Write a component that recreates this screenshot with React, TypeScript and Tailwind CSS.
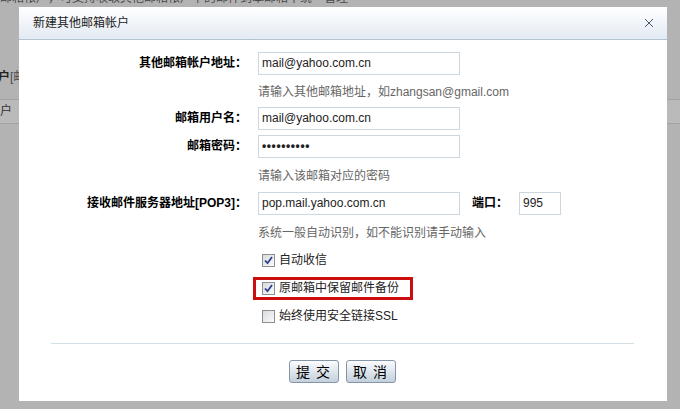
import React from "react";

function Check({ checked }: { checked: boolean }) {
  return (
    <span className="relative flex h-[13px] w-[13px] shrink-0 items-center justify-center border border-[#8c8f93] bg-gradient-to-br from-[#d9dbdd] to-[#f9fafa]">
      {checked && (
        <svg width="9" height="9" viewBox="0 0 9 9" className="block">
          <path d="M1 4.5 L3.5 7.2 L8 1" fill="none" stroke="#2a3f8f" strokeWidth="1.8" />
        </svg>
      )}
    </span>
  );
}

function Field({ value, w = "w-[202px]" }: { value: React.ReactNode; w?: string }) {
  return (
    <div className={`flex h-[23px] ${w} items-center border border-[#cdd7df] bg-white px-[3px] text-[12px] leading-[15px] text-[#222]`}>
      {value}
    </div>
  );
}

function Label({ children }: { children: React.ReactNode }) {
  return (
    <div className="flex h-[23px] w-[228px] shrink-0 items-center justify-end whitespace-nowrap text-[12px] font-bold leading-[15px] text-black">
      {children}
    </div>
  );
}

function Hint({ children, cls }: { children: React.ReactNode; cls: string }) {
  return (
    <div className={`${cls} ml-[239px] flex h-[18px] items-center whitespace-nowrap text-[12px] leading-[15px] text-[#666]`}>
      {children}
    </div>
  );
}

function CbRow({ label, checked, red, cls }: { label: string; checked: boolean; red?: boolean; cls: string }) {
  return (
    <div
      className={`${cls} ml-[234px] flex h-[23px] w-[160px] items-center gap-[4px] whitespace-nowrap border-[3px] pl-[6px] text-[12px] text-[#222] ${
        red ? "border-[#cc0d0d]" : "border-transparent"
      }`}
    >
      <Check checked={checked} />
      <span className="leading-[15px]">{label}</span>
    </div>
  );
}

export default function App() {
  return (
    <div className="relative h-[409px] w-[680px] overflow-hidden bg-[#b3b3b3] font-['Liberation_Sans','Noto_Sans_CJK_SC',sans-serif]">
      {/* page underneath */}
      <div className="-mt-[10px] flex h-[16px] items-center whitespace-nowrap text-[12px] leading-[15px] text-[#4a4a4a]">
        邮箱帐户，可支持收取其他邮箱帐户下的邮件到本邮箱中统一管理
      </div>
      <div className="mt-[63px] flex h-[16px] items-center whitespace-nowrap text-[12px] leading-[15px] text-[#4a4a4a]">
        <span className="-ml-[2px] font-bold text-[#222]">户</span>[邮箱设置]
      </div>
      <div className="mt-[14px] flex h-[25px] items-center border-y border-[#a2a2a2] bg-[#bababa] text-[12px] leading-[15px] text-[#333]">
        户
      </div>

      {/* dialog */}
      <div className="absolute left-[19px] top-[7px] w-[648px] bg-white">
        <div className="flex h-[33px] items-center justify-between border-b border-[#b3c3d0] bg-gradient-to-b from-white to-[#e3eaf3] pl-[14px] pr-[13px]">
          <span className="text-[12px] leading-[15px] text-[#222]">新建其他邮箱帐户</span>
          <svg width="10" height="10" viewBox="0 0 10 10">
            <path d="M1 1 L9 9 M9 1 L1 9" stroke="#4b5866" strokeWidth="1" />
          </svg>
        </div>
        <div className="pb-[18px] pt-[12px]">
          <div className="flex h-[23px] items-center">
            <Label>其他邮箱帐户地址：</Label>
            <div className="ml-[11px]">
              <Field value="mail@yahoo.com.cn" />
            </div>
          </div>
          <Hint cls="mt-[8px]">请输入其他邮箱地址，如zhangsan@gmail.com</Hint>
          <div className="mt-[6px] flex h-[23px] items-center">
            <Label>邮箱用户名：</Label>
            <div className="ml-[11px]">
              <Field value="mail@yahoo.com.cn" />
            </div>
          </div>
          <div className="mt-[5px] flex h-[23px] items-center">
            <Label>邮箱密码：</Label>
            <div className="ml-[11px]">
              <Field value={<span className="font-bold tracking-[0.6px]">••••••••••</span>} />
            </div>
          </div>
          <Hint cls="mt-[9px]">请输入该邮箱对应的密码</Hint>
          <div className="mt-[7px] flex h-[23px] items-center">
            <Label>接收邮件服务器地址[POP3]：</Label>
            <div className="ml-[11px]">
              <Field value="pop.mail.yahoo.com.cn" />
            </div>
            <span className="ml-[12px] w-[36px] whitespace-nowrap text-[12px] font-bold leading-[15px] text-black">端口：</span>
            <div className="ml-[11px]">
              <Field value="995" w="w-[42px]" />
            </div>
          </div>
          <Hint cls="mt-[9px]">系统一般自动识别，如不能识别请手动输入</Hint>
          <CbRow cls="mt-[7px]" label="自动收信" checked />
          <CbRow cls="mt-[5px]" label="原邮箱中保留邮件备份" checked red />
          <CbRow cls="mt-[5px]" label="始终使用安全链接SSL" checked={false} />
          <div className="ml-[32px] mt-[15px] h-px w-[583px] bg-[#d3dee5]" />
          <div className="mt-[16px] flex justify-center gap-[7px] pr-[2px]">
            <button className="flex h-[23px] w-[50px] items-center justify-center rounded-[3px] border border-[#8596a8] bg-gradient-to-b from-[#fbfcfd] to-[#c3d0dc] text-[14px] leading-[16px] tracking-[1px] text-black">
              提 交
            </button>
            <button className="flex h-[23px] w-[50px] items-center justify-center rounded-[3px] border border-[#8596a8] bg-gradient-to-b from-[#fbfcfd] to-[#c3d0dc] text-[14px] leading-[16px] tracking-[1px] text-black">
              取 消
            </button>
          </div>
        </div>
      </div>
    </div>
  );
}
